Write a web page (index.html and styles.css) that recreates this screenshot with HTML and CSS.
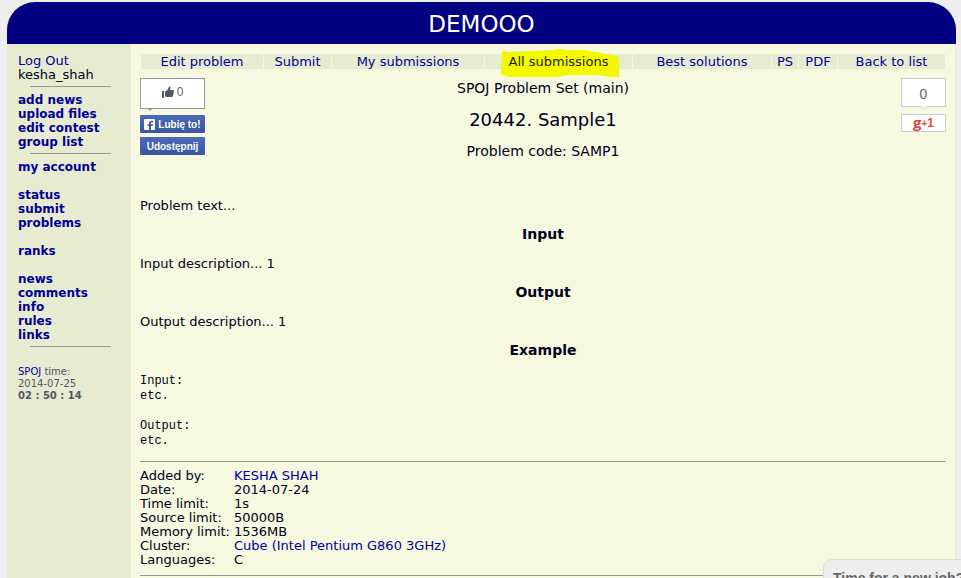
FILE: index.html
```html
<!DOCTYPE html>
<html lang="en">
<head>
    <meta charset="UTF-8">
    <meta name="viewport" content="width=device-width, initial-scale=1.0">
    <title>DEMOOO - 20442. Sample1</title>
    <link rel="stylesheet" href="styles.css">
</head>
<body>
    <div class="page">
        <header class="header">DEMOOO</header>
        <div class="columns">
            <!-- Left menu -->
            <aside class="sidebar">
                <div><a href="#">Log Out</a></div>
                <div>kesha_shah</div>
                <hr>
                <nav class="menu">
                    <a href="#">add news</a>
                    <a href="#">upload files</a>
                    <a href="#">edit contest</a>
                    <a href="#">group list</a>
                </nav>
                <hr>
                <nav class="menu">
                    <a href="#">my account</a>
                    <a class="group" href="#">status</a>
                    <a href="#">submit</a>
                    <a href="#">problems</a>
                    <a class="group" href="#">ranks</a>
                    <a class="group" href="#">news</a>
                    <a href="#">comments</a>
                    <a href="#">info</a>
                    <a href="#">rules</a>
                    <a href="#">links</a>
                </nav>
                <hr>
                <div class="clock">
                    <a href="#">SPOJ</a> time:<br>
                    2014-07-25<br>
                    <b>02 : 50 : 14</b>
                </div>
            </aside>

            <main class="content">
                <nav class="tabs">
                    <a href="#">Edit problem</a>
                    <a href="#">Submit</a>
                    <a href="#">My submissions</a>
                    <a class="marked" href="#">
                        <svg class="marker" viewBox="0 0 118 28" preserveAspectRatio="none"><path d="M1 2 L5 2 L5 3 L54 1 L54 0 L63 0 L63 1 L86 1 L86 2 L97 3 L104 5 L111 6 L118 8 L118 28 L106 28 L106 27 L92 26 L66 26 L57 28 L7 28 L7 27 L0 26 Z" fill="#f4f800"/></svg>
                        <span>All submissions</span>
                    </a>
                    <a href="#">Best solutions</a>
                    <a href="#">PS</a>
                    <a href="#">PDF</a>
                    <a href="#">Back to list</a>
                </nav>

                <div class="top">
                    <div class="facebook">
                        <div class="fb-count">
                            <svg width="12" height="12" viewBox="0 0 12 12"><path d="M0 5h2v7H0zM3 5.5L5.5 4 7 0.5C8.500 0 9 1.500 8 4h3.200c1 0 1 1.500.3 1.800.6.4.5 1.500-.2 1.800.4.6.1 1.400-.5 1.600.3.8-.2 1.800-1.200 1.800H5.500L3 10.500z" fill="#4b5a6b"/></svg>
                            <span>0</span>
                        </div>
                        <button class="fb-button">
                            <svg width="11" height="11" viewBox="0 0 11 11"><rect width="11" height="11" rx="1" fill="#fff"/><path d="M5 11V7H3.500V5.200H5V4C5 2.500 6 1.700 7.500 1.700H9v1.800H8c-.7 0-1 .2-1 .8v.9h2L8.700 7H7v4z" fill="#4460ac"/></svg>
                            Lubię to!
                        </button>
                        <button class="fb-button">Udostępnij</button>
                    </div>
                    <div class="titles">
                        <p>SPOJ Problem Set (main)</p>
                        <h1>20442. Sample1</h1>
                        <p>Problem code: SAMP1</p>
                    </div>
                    <div class="google">
                        <div class="g-count">0</div>
                        <button class="g-button"><span class="g-letter">g</span><span class="g-plus">+</span><span>1</span></button>
                    </div>
                </div>

                <div class="problem">
                    <p>Problem text...</p>
                    <h3>Input</h3>
                    <p>Input description... 1</p>
                    <h3>Output</h3>
                    <p>Output description... 1</p>
                    <h3>Example</h3>
<pre>Input:
etc.

Output:
etc.</pre>
                </div>

                <hr>
                <table class="info">
                    <tr><th>Added by:</th><td><a href="#">KESHA SHAH</a></td></tr>
                    <tr><th>Date:</th><td>2014-07-24</td></tr>
                    <tr><th>Time limit:</th><td>1s</td></tr>
                    <tr><th>Source limit:</th><td>50000B</td></tr>
                    <tr><th>Memory limit:</th><td>1536MB</td></tr>
                    <tr><th>Cluster:</th><td><a href="#">Cube (Intel Pentium G860 3GHz)</a></td></tr>
                    <tr><th>Languages:</th><td>C</td></tr>
                </table>
                <hr>
            </main>
        </div>
    </div>

    <a class="job" href="#">Time for a new job?</a>
</body>
</html>
```
FILE: styles.css
```css
* {
    box-sizing: border-box;
}

body {
    margin: 0;
    padding: 2px 5px 0 7px;
    height: 100vh;
    overflow: hidden;
    background: #eee;
    color: #000020;
    font-family: Verdana, "DejaVu Sans", sans-serif;
    font-size: 13px;
    line-height: 14px;
}

a {
    color: #000099;
    text-decoration: none;
}

p, h1, h3, pre {
    margin: 0;
}

hr {
    margin: 0;
    border: 0;
    border-top: 1px solid #999;
}

.page {
    display: flex;
    flex-direction: column;
    min-height: 100vh;
}

.header {
    height: 42px;
    background: #000080;
    border-radius: 28px 28px 0 0;
    color: #fff;
    font-size: 23px;
    line-height: 44px;
    text-align: center;
}

.columns {
    display: flex;
    flex: 1;
    border-right: 1px solid #e7ecd0;
}

/* Left menu */
.sidebar {
    flex: 0 0 124px;
    padding: 10px 11px;
    background: #e7ecd0;
}

.sidebar hr {
    margin: 4px 9px 6px 12px;
}

.menu {
    display: flex;
    flex-direction: column;
    font-size: 12px;
    font-weight: bold;
}

.menu .group {
    margin-top: 14px;
}

.clock {
    margin-top: 19px;
    color: #555566;
    font-size: 10px;
    line-height: 12px;
}

/* Problem page */
.content {
    flex: 1;
    padding: 10px 9px;
    background: #f6f8e0;
}

.tabs {
    display: grid;
    grid-template-columns: 122fr 67fr 152fr 147fr 138fr 26fr 38fr 107fr;
    gap: 1px;
    padding: 0 1px;
    line-height: 15px;
}

.tabs a {
    background: #e7ecd0;
    text-align: center;
    white-space: nowrap;
}

.tabs .marked {
    position: relative;
    color: #202000;
}

.marked span {
    position: relative;
}

.marker {
    position: absolute;
    top: -5px;
    left: 16px;
    width: 118px;
    height: 28px;
}

.top {
    display: flex;
    justify-content: space-between;
    margin-top: 9px;
}

.facebook,
.google {
    display: flex;
    flex-direction: column;
    gap: 4px;
    width: 65px;
}

.google {
    align-items: flex-end;
}

.fb-count,
.g-count {
    position: relative;
    display: flex;
    align-items: center;
    justify-content: center;
    background: #fff;
}

.fb-count {
    gap: 3px;
    height: 31px;
    margin-bottom: 2px;
    padding-bottom: 3px;
    border: 1px solid #9197a3;
    color: #666;
    font-family: Arial, "Liberation Sans", sans-serif;
    font-size: 12px;
}

.fb-count::after,
.g-count::after {
    content: "";
    position: absolute;
    top: 100%;
    border: 3px solid transparent;
    border-bottom: 0;
}

.fb-count::after {
    left: 6px;
    border-top-color: #9197a3;
}

.fb-button {
    display: flex;
    align-items: center;
    justify-content: space-around;
    height: 18px;
    padding: 0 3px;
    border: 0;
    border-radius: 1px;
    background: linear-gradient(#4c69ba, #3b55a0);
    color: #fff;
    font-family: Arial, "Liberation Sans", sans-serif;
    font-size: 10px;
    font-weight: bold;
    white-space: nowrap;
}

.g-count {
    width: 45px;
    height: 29px;
    margin-bottom: 3px;
    padding-top: 2px;
    border: 1px solid #ccc;
    color: #666;
    font-family: Arial, "Liberation Sans", sans-serif;
    font-size: 14px;
}

.g-count::after {
    border-top-color: #fff;
    filter: drop-shadow(0 1px 0 #ccc);
}

.g-button {
    display: flex;
    align-items: center;
    justify-content: center;
    width: 45px;
    height: 18px;
    padding: 0;
    border: 1px solid #ccc;
    border-radius: 1px;
    background: #fff;
    color: #dd4b39;
    font-family: Arial, "Liberation Sans", sans-serif;
    font-size: 12px;
    font-weight: bold;
}

.g-letter {
    padding-bottom: 3px;
    font-family: "Open Sans", sans-serif;
    font-size: 15px;
    line-height: 12px;
}

.g-plus {
    font-size: 10px;
}

.titles {
    font-size: 14px;
    line-height: 20px;
    text-align: center;
}

.titles h1 {
    margin: 10px 0 9px;
    font-size: 18px;
    font-weight: normal;
    line-height: 24px;
}

.problem {
    margin-top: 38px;
}

.problem h3 {
    margin: 11px 0 13px;
    font-size: 14px;
    line-height: 20px;
    text-align: center;
}

.problem pre {
    margin: 14px 0 12px;
    font-family: "Courier New", "Liberation Mono", monospace;
    font-size: 12px;
    line-height: 15px;
}

.info {
    margin: 7px 0 8px;
    border-collapse: collapse;
}

.info th {
    padding: 0 4px 0 0;
    font-weight: normal;
    text-align: left;
}

.info td {
    padding: 0;
}

/* Banner in the bottom corner */
.job {
    position: fixed;
    right: 0;
    bottom: 0;
    width: 138px;
    height: 19px;
    padding: 11px 0 0 9px;
    border: 1px solid #ddd;
    border-width: 1px 0 0 1px;
    border-radius: 9px 0 0 0;
    background: #eee;
    color: #666;
    font-family: Arial, "Liberation Sans", sans-serif;
    font-size: 14px;
    font-weight: bold;
    white-space: nowrap;
    overflow: hidden;
}
```
